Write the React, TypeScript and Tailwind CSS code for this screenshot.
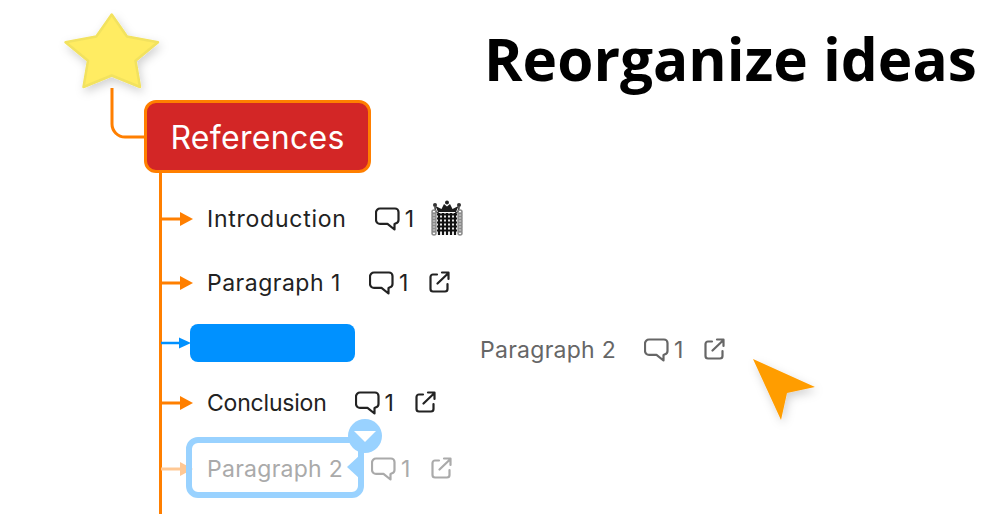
const ORANGE = "#ff7f00";

function CommentIcon({ color }: { color: string }) {
  return (
    <svg width="25" height="26" viewBox="0 0 25 26" fill="none" stroke={color} strokeWidth="2.2" strokeLinejoin="round" strokeLinecap="round">
      <path d="M5 2.500h15a3.500 3.500 0 0 1 3.500 3.500v8a3.500 3.500 0 0 1-2.500 3.300l-1.500 .6v5.600l-7-5.600h-7.500a4 4 0 0 1-4-4v-7.400a4 4 0 0 1 4-4z" />
    </svg>
  );
}

function LinkIcon({ color }: { color: string }) {
  return (
    <svg className="-mt-[3px]" width="21" height="22" viewBox="0 0 21 22" fill="none" stroke={color} strokeWidth="2.2" strokeLinecap="round" strokeLinejoin="round">
      <path d="M8 3.500H4a2.500 2.500 0 0 0-2.500 2.500v12a2.500 2.500 0 0 0 2.500 2.500h12a2.500 2.500 0 0 0 2.500-2.500v-5" />
      <path d="M8.500 12.500L19.500 2M13 1.500h6.500v6.500" />
    </svg>
  );
}

function Portcullis() {
  const chain = [12, 15, 18, 21, 24, 27, 30, 33];
  return (
    <svg className="-ml-[4px]" width="32" height="38" viewBox="0 0 32 38" fill="none">
      <path d="M7 12L4.500 6l6 3 2.500-5 3 2.500L19 4l2.500 5 6-3L25 12z" fill="#1c1c1c" />
      <circle cx="16" cy="2.500" r="2" fill="#222" />
      <circle cx="4" cy="5" r="2" fill="#333" />
      <circle cx="28" cy="5" r="2" fill="#333" />
      <path d="M4 7q0 6 4 6M28 7q0 6-4 6" stroke="#333" strokeWidth="1.500" />
      {[9, 13, 17, 21, 25].map((x) => (
        <path key={x} d={`M${x - 1} 13V35`} stroke="#111" strokeWidth="2.200" />
      ))}
      {[14.5, 18.5, 22.5, 26.5, 30.5].map((y) => (
        <path key={y} d={`M6 ${y}H26`} stroke="#111" strokeWidth="2" />
      ))}
      {chain.map((y) => (
        <g key={y}>
          <circle cx="3" cy={y} r="2" stroke="#8a8a8a" strokeWidth="1.500" />
          <circle cx="29" cy={y} r="2" stroke="#8a8a8a" strokeWidth="1.500" />
        </g>
      ))}
    </svg>
  );
}

function Arrow({ color, blue }: { color: string; blue?: boolean }) {
  return (
    <svg className="shrink-0" width="32" height="16" viewBox="0 0 32 16" fill="none">
      <path d={blue ? "M0 8H20" : "M0 8H21"} stroke={color} strokeWidth={blue ? 2.5 : 3} />
      <path d={blue ? "M18 2.500L30 8L18 13.500z" : "M19 1L32 8L19 15z"} fill={color} />
    </svg>
  );
}

function Topic({ label, color, iconColor, tracking, extra }: {
  label: string;
  color: string;
  iconColor: string;
  tracking: string;
  extra?: React.ReactNode;
}) {
  return (
    <div className="flex h-10 items-center">
      <span className={`whitespace-nowrap text-[23px] ${tracking} ${color}`}>{label}</span>
      <span className="ml-[28px] flex items-center">
        <CommentIcon color={iconColor} />
        <span className={`ml-[5px] text-[23px] ${color}`}>1</span>
      </span>
      <span className="ml-[21px]">{extra ?? <LinkIcon color={iconColor} />}</span>
    </div>
  );
}

export default function App() {
  return (
    <div className="relative h-[514px] w-[1000px] overflow-hidden bg-white font-['Inter','Noto_Sans',sans-serif]">
      <h1 className="absolute left-[484px] top-[19px] whitespace-nowrap font-['Open_Sans',sans-serif] text-[58.5px] font-bold leading-[78px] text-black">
        Reorganize ideas
      </h1>

      {/* connectors and the star */}
      <svg className="absolute left-0 top-0" width="1000" height="514" fill="none">
        <defs>
          <filter id="soft" x="-30%" y="-30%" width="160%" height="160%">
            <feDropShadow dx="2" dy="4" stdDeviation="5" floodColor="#000" floodOpacity="0.18" />
          </filter>
        </defs>
        <path d="M112 88V124a13 13 0 0 0 13 13H146" stroke={ORANGE} strokeWidth="3" />
        <path d="M160.500 172V514" stroke={ORANGE} strokeWidth="3" />
        <path
          d="M111.700 14.500L127 36.500L158 42.200L135.500 60.700L140 87L111.700 75.500L83.500 87L88 60.700L65.500 42.200L96.300 36.500z"
          fill="#ffec62"
          stroke="#f2e25e"
          strokeWidth="2.500"
          strokeLinejoin="round"
          filter="url(#soft)"
        />
        <path d="M753 359L815 387L787 393L781 420z" fill="#ff9d00" filter="url(#soft)" />
      </svg>

      <div className="absolute left-[144px] top-[100px] flex h-[73px] w-[227px] items-center justify-center rounded-xl border-[3px] border-[#ff7f00] bg-[#d32626] pt-[2px] text-[32px] tracking-[0.3px] text-white">
        References
      </div>

      {/* branch list */}
      <div className="absolute left-[161px] top-[199px] flex flex-col gap-5">
        <div className="mb-1 flex items-center gap-[14px]">
          <Arrow color={ORANGE} />
          <Topic label="Introduction" tracking="tracking-[0.75px]" color="text-[#222]" iconColor="#222" extra={<Portcullis />} />
        </div>
        <div className="flex items-center gap-[14px]">
          <Arrow color={ORANGE} />
          <Topic label="Paragraph 1" tracking="tracking-[0.5px]" color="text-[#222]" iconColor="#222" />
        </div>
        <div className="flex h-10 items-center">
          <Arrow color="#0091ff" blue />
          <div className="-ml-[3px] h-[38px] w-[165px] rounded-lg bg-[#0091ff]" />
        </div>
        <div className="flex items-center gap-[14px]">
          <Arrow color={ORANGE} />
          <Topic label="Conclusion" tracking="tracking-[-0.2px]" color="text-[#222]" iconColor="#222" />
        </div>
        <div className="mt-[6px] flex items-center gap-[14px]">
          <Arrow color="#ffc894" />
          <Topic label="Paragraph 2" tracking="tracking-[0.27px]" color="text-[#aaa]" iconColor="#aaa" />
        </div>
      </div>

      {/* topic being dragged */}
      <div className="absolute left-[480px] top-[330px]">
        <Topic label="Paragraph 2" tracking="tracking-[0.27px]" color="text-[#666]" iconColor="#666" />
      </div>

      {/* drop outline at the old place */}
      <div className="absolute left-[186px] top-[437px] h-[61px] w-[178px] rounded-xl border-[6px] border-[#99d2ff]" />
      <div className="absolute left-[348px] top-[419px] flex h-[34px] w-[34px] items-center justify-center rounded-full bg-[#99d2ff]">
        <div className="h-0 w-0 border-x-[11px] border-t-[11px] border-x-transparent border-t-white" />
      </div>
      <div className="absolute left-[347px] top-[455px] h-0 w-0 border-y-[12px] border-r-[13px] border-y-transparent border-r-[#99d2ff]" />
    </div>
  );
}
